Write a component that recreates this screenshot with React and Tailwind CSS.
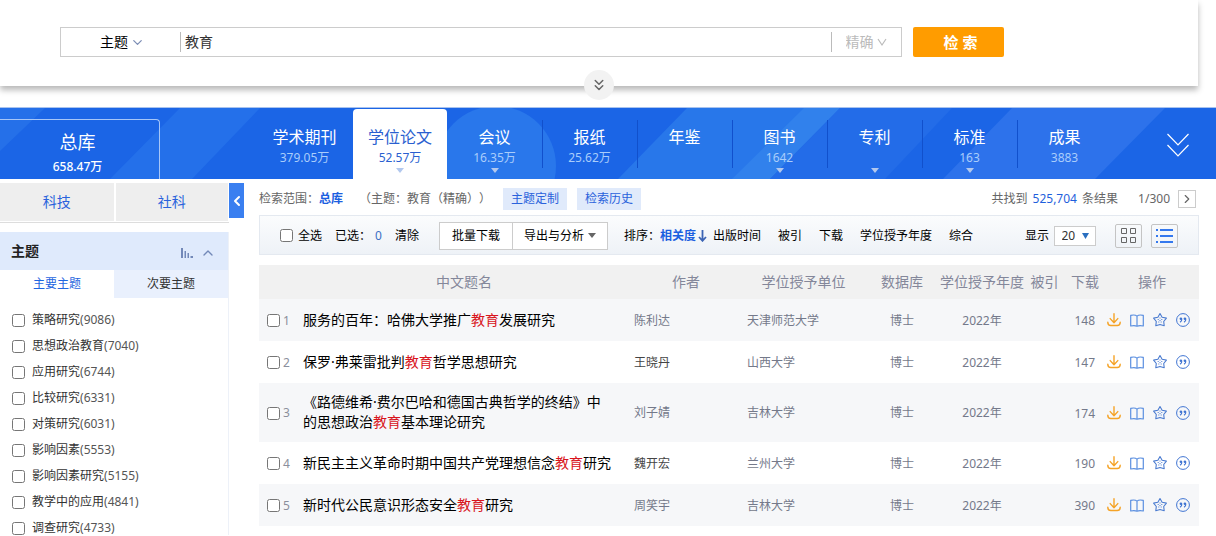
import { useState } from "react";
import { ChevronDown, ChevronLeft, ChevronRight, ChevronUp, ChevronsDown } from "lucide-react";

const databases = [
  { name: "学术期刊", count: "379.05万" },
  { name: "学位论文", count: "52.57万", more: true },
  { name: "会议", count: "16.35万", more: true },
  { name: "报纸", count: "25.62万" },
  { name: "年鉴", count: "" },
  { name: "图书", count: "1642", more: true },
  { name: "专利", count: "", more: true },
  { name: "标准", count: "163", more: true },
  { name: "成果", count: "3883" },
];

const topics = [
  ["策略研究", 9086],
  ["思想政治教育", 7040],
  ["应用研究", 6744],
  ["比较研究", 6331],
  ["对策研究", 6031],
  ["影响因素", 5553],
  ["影响因素研究", 5155],
  ["教学中的应用", 4841],
  ["调查研究", 4733],
];

const results = [
  { title: "服务的百年：哈佛大学推广教育发展研究", author: "陈利达", unit: "天津师范大学", downloads: 148 },
  { title: "保罗·弗莱雷批判教育哲学思想研究", author: "王晓丹", unit: "山西大学", downloads: 147, linked: true },
  { title: "《路德维希·费尔巴哈和德国古典哲学的终结》中的思想政治教育基本理论研究", author: "刘子婧", unit: "吉林大学", downloads: 174 },
  { title: "新民主主义革命时期中国共产党理想信念教育研究", author: "魏开宏", unit: "兰州大学", downloads: 190, linked: true },
  { title: "新时代公民意识形态安全教育研究", author: "周笑宇", unit: "吉林大学", downloads: 390 },
];

function DownloadIcon() {
  return (
    <svg width="14" height="14" viewBox="0 0 14 14" fill="none" stroke="#f5a327" strokeWidth="1.4" strokeLinecap="round" strokeLinejoin="round">
      <path d="M7 .8v9M3.2 5.6 7 9.8l3.8-4.2" />
      <path d="M.8 9.3c0 2.2 1 3.2 3 3.2h6.4c2 0 3-1 3-3.2" />
    </svg>
  );
}

function BookIcon() {
  return (
    <svg width="14" height="14" viewBox="0 0 14 14" fill="none" stroke="#5b8fe0" strokeWidth="1.2" strokeLinejoin="round">
      <path d="M7 3.2C5.6 1.8 3 1.8.7 2.400v10.600c2.400-.4 4.700-.4 6.300.2 1.600-.6 3.900-.6 6.300-.2V2.400C11 1.800 8.400 1.800 7 3.200zM7 3.200v10" />
    </svg>
  );
}

function StarIcon() {
  return (
    <svg width="14" height="14" viewBox="0 0 14 14" fill="none" stroke="#4a7bd0" strokeWidth="1.1" strokeLinejoin="round">
      <path d="M7 .6l2.100 3.700 4.300.8-2.700 3.400.5 4.300L7 11.400l-4.200 1.400.5-4.300L.6 5.100l4.300-.8z" />
      <path d="M4.700 6.500h1M8.300 6.500h1M6.500 5h1M6.500 7.500h1M5.300 9h1M7.700 9h1" strokeWidth="1" />
    </svg>
  );
}

function QuoteIcon() {
  return (
    <svg width="14" height="14" viewBox="0 0 14 14" fill="none" stroke="#3f74d2">
      <circle cx="7" cy="7" r="6.4" strokeWidth="1" />
      <circle cx="4.900" cy="5.700" r="1.300" fill="#3f74d2" stroke="none" />
      <circle cx="8.900" cy="5.700" r="1.300" fill="#3f74d2" stroke="none" />
      <path d="M5.800 5.700c.2 1.700-.5 2.900-1.800 3.600M9.800 5.700c.2 1.700-.5 2.900-1.800 3.600" strokeWidth="1.100" />
    </svg>
  );
}

function Triangle({ className }) {
  return (
    <svg width="8" height="5" viewBox="0 0 8 5" className={className}>
      <path d="M0 0h8L4 5z" fill="currentColor" />
    </svg>
  );
}

function SearchPanel() {
  return (
    <section className="relative mr-[18px] h-[86px] bg-white pt-[27px] pr-[194px] pl-[60px] shadow-[0_4px_6px_rgba(0,0,0,0.28)]">
      <form className="flex gap-[11px]" onSubmit={(e) => e.preventDefault()}>
        <div className="flex h-[30px] flex-1 items-center border border-[#ccc] text-sm">
          <label className="flex w-[119px] items-center justify-center gap-0.5 pl-1">
            <select aria-label="检索项" className="appearance-none text-black outline-none">
              <option>主题</option>
            </select>
            <ChevronDown size={15} className="text-[#7c8db5]" />
          </label>
          <input
            aria-label="检索词"
            defaultValue="教育"
            className="h-5 min-w-0 flex-1 border-l border-[#bbb] pl-1 text-[#333] outline-none"
          />
          <label className="flex h-5 w-[70px] items-center justify-center gap-0.5 border-l border-[#bbb] text-[#bbb]">
            <select aria-label="匹配方式" className="appearance-none outline-none">
              <option>精确</option>
            </select>
            <svg width="12" height="10" viewBox="0 0 12 10" fill="none" stroke="currentColor" strokeWidth="1.200">
              <path d="M2 2l4 6 4-6" />
            </svg>
          </label>
        </div>
        <button className="h-[30px] w-[91px] rounded-xs bg-[#ff9c00] pl-1 text-[15px] font-bold text-white">检 索</button>
      </form>
      <button
        aria-label="展开"
        className="absolute -bottom-[14px] left-1/2 flex size-[30px] -translate-x-1/2 items-center justify-center rounded-full bg-[#f2f2f2] text-[#666]"
      >
        <ChevronsDown size={18} />
      </button>
    </section>
  );
}

function DatabaseNav() {
  const [active, setActive] = useState("学位论文");

  return (
    <nav className="relative mt-[21px] border-t border-[#a9c3ee] bg-[#1b65e6]">
      {/* Diagonal background pattern */}
      <svg className="absolute inset-0 size-full" viewBox="0 0 1216 71" preserveAspectRatio="none">
        <path d="M0 0h45L0 43z" fill="#2570e9" />
        <path d="M180 0h80l-68 71h-82z" fill="#2470ea" />
        <circle cx="496" cy="58" r="60" fill="#2977eb" />
        <path d="M687 0h153l-70 71H618z" fill="#2877ea" />
        <path d="M804 0h36l-70 71h-38z" fill="#3181ec" />
        <path d="M840 0h112l-67 71H770z" fill="#236ce8" />
        <path d="M1012 0h153l-70 71H943z" fill="#2d72eb" />
      </svg>

      <div className="relative flex h-[71px]">
        <button className="mt-[11px] mr-[97px] flex w-[160px] flex-col items-center rounded-tr-sm border-t border-r border-[#a6c6f8] pt-3 pr-1 text-white">
          <span className="text-lg leading-5">总库</span>
          <span className="mt-[5px] text-xs leading-5 font-medium">658.47万</span>
        </button>
        <div className="grid flex-1 grid-cols-9">
          {databases.map((db, i) => (
            <button
              key={db.name}
              onClick={() => setActive(db.name)}
              className={
                active === db.name
                  ? "mt-px ml-px flex flex-col items-center rounded-t-sm bg-white pt-[18px] text-[#2a5fd0]"
                  : "flex flex-col items-center pt-[19px] text-white"
              }
            >
              <span className="relative w-full text-base leading-5">
                {db.name}
                {i > 1 && i < 8 && <span className="absolute -top-[7px] -right-px h-[48px] w-px bg-[#1150cc]" />}
              </span>
              <span className={active === db.name ? "mt-px h-5 text-xs leading-5" : "mt-px h-5 text-xs leading-5 text-[#a9cdfb]"}>
                {db.count}
              </span>
              {db.more && <Triangle className="text-[#b2c8ee]" />}
            </button>
          ))}
        </div>
        <button aria-label="更多" className="flex w-[104px] items-center justify-center pt-0.5 pl-7 text-white">
          <svg width="22" height="24" viewBox="0 0 22 24" fill="none" stroke="currentColor" strokeWidth="1.200">
            <path d="M.5 1 11 12 21.500 1M.5 12 11 23 21.500 12" />
          </svg>
        </button>
      </div>
    </nav>
  );
}

function Sidebar() {
  return (
    <aside className="w-[229px] shrink-0">
      <div className="mt-1 grid grid-cols-2 gap-0.5 border-b border-[#ddd] pb-px text-sm text-[#2a62dc]">
        <button className="h-[38px] bg-[#eee]">科技</button>
        <button className="mr-px h-[38px] bg-[#eee]">社科</button>
      </div>
      <div className="mt-[9px] border-r border-[#edf1f8]">
        <div className="flex h-[38px] items-center bg-[#dfeafc] pr-3 pl-[11px]">
          <h2 className="flex-1 text-sm font-bold text-[#222]">主题</h2>
          <svg width="12" height="10" viewBox="0 0 12 10" className="mt-1 mr-[7px]" fill="#7288b8">
            <path d="M0 0h2v10H0zM3.500 3h1.500v7H3.500zM6.500 5H8v5H6.500zM9.500 8H12v2H9.500z" />
          </svg>
          <ChevronUp size={16} className="mt-1 text-[#7288b8]" />
        </div>
        <div className="grid h-7 grid-cols-2 text-xs">
          <button className="text-[#1f66e0]">主要主题</button>
          <button className="bg-[#e9f0fd] text-[#333]">次要主题</button>
        </div>
        <ul className="flex flex-col gap-3 pt-[15px] pl-3">
          {topics.map(([name, count]) => (
            <li key={name}>
              <label className="flex h-3.5 items-center gap-[7px] text-xs leading-3.5 text-[#333]">
                <input type="checkbox" className="size-[13px]" />
                <span>
                  {name}
                  <span className="text-[#555]">({count})</span>
                </span>
              </label>
            </li>
          ))}
        </ul>
      </div>
    </aside>
  );
}

function ScopeBar() {
  return (
    <div className="flex h-9 items-center pt-1 text-xs text-[#666]">
      <span>检索范围：</span>
      <b className="text-[#1b60e0]">总库</b>
      <span className="ml-4 whitespace-nowrap">（主题：教育（精确））</span>
      <button className="ml-3 h-[22px] bg-[#e0eafb] px-2 text-[#2a62dc]">主题定制</button>
      <button className="ml-[10px] h-[22px] bg-[#e0eafb] px-2 text-[#2a62dc]">检索历史</button>
      <span className="ml-auto">
        共找到 <span className="mx-0.5 text-[#1f5fdc]">525,704</span> 条结果
      </span>
      <span className="ml-5">1/300</span>
      <button aria-label="下一页" className="mr-[3px] ml-2 flex size-[18px] items-center justify-center border border-[#ccc]">
        <ChevronRight size={14} />
      </button>
    </div>
  );
}

function Toolbar() {
  return (
    <div className="flex h-10 items-center border border-[#e4e9f0] bg-linear-to-b from-[#fbfcfd] to-[#eef2f7] pt-px pr-5 pl-5 text-xs whitespace-nowrap text-black">
      <label className="flex items-center gap-[5px]">
        <input type="checkbox" className="size-[13px]" />
        全选
      </label>
      <span className="ml-[13px]">
        已选：<span className="ml-1 text-[#3c6fc4]">0</span>
      </span>
      <button className="ml-[13px]">清除</button>
      <div className="ml-5 flex h-7">
        <button className="border border-[#ccc] bg-white px-3">批量下载</button>
        <button className="-ml-px flex items-center gap-1 border border-[#ccc] bg-white px-[11px]">
          导出与分析
          <Triangle className="text-[#666]" />
        </button>
      </div>
      <span className="ml-4">排序：</span>
      <button className="flex items-center font-bold text-[#1b60e0]">
        相关度
        <svg width="9" height="12" viewBox="0 0 9 12" className="ml-0.5" fill="none" stroke="#3c64b4" strokeWidth="1.800">
          <path d="M4.500 0v10.500M1 7l3.500 3.800L8 7" />
        </svg>
      </button>
      <button className="ml-[6px]">出版时间</button>
      <button className="ml-[17px]">被引</button>
      <button className="ml-[17px]">下载</button>
      <button className="ml-[17px]">学位授予年度</button>
      <button className="ml-[17px]">综合</button>
      <label className="ml-auto flex items-center gap-[5px]">
        显示
        <span className="flex h-5 w-[42px] items-center justify-center gap-1.5 border border-[#ccc] bg-white text-[#333]">
          <select className="appearance-none outline-none">
            <option>20</option>
          </select>
          <svg width="7" height="6" viewBox="0 0 7 6">
            <path d="M0 0h7L3.500 6z" fill="#2a6fc0" />
          </svg>
        </span>
      </label>
      <button aria-label="摘要视图" className="ml-[19px] flex h-6 w-[27px] items-center justify-center rounded-xs border border-[#c4c4c4]">
        <svg width="17" height="17" viewBox="0 0 17 17" fill="none" stroke="#666">
          <path d="M1.500 1.500h5v5h-5zM10.500 1.500h5v5h-5zM1.500 10.500h5v5h-5zM10.500 10.500h5v5h-5z" />
        </svg>
      </button>
      <button aria-label="列表视图" className="ml-[9px] flex h-6 w-[27px] items-center justify-center rounded-xs border border-[#c4c4c4]">
        <svg width="17" height="14" viewBox="0 0 17 14" fill="#3478ee">
          <path d="M0 0h2v2H0zM4 0h13v2H4zM0 6h2v2H0zM4 6h13v2H4zM0 12h2v2H0zM4 12h13v2H4z" />
        </svg>
      </button>
    </div>
  );
}

function ResultTable() {
  return (
    <table className="mt-[10px] w-full table-fixed text-xs text-[#74798a]">
      <thead>
        <tr className="h-[34px] bg-[#f1f1f1] text-sm whitespace-nowrap text-[#84879a] *:font-normal">
          <th className="w-[44px]"></th>
          <th>中文题名</th>
          <th className="w-[122px]">作者</th>
          <th className="w-[113px]">学位授予单位</th>
          <th className="w-[80px] pl-1">数据库</th>
          <th className="w-[84px]">学位授予年度</th>
          <th className="w-[41px]">被引</th>
          <th className="w-[40px]">下载</th>
          <th className="w-[94px]">操作</th>
        </tr>
      </thead>
      <tbody>
        {results.map((row, i) => {
          const [before, after] = row.title.split("教育");
          return (
            <tr key={row.title} className="h-[42px] odd:bg-[#f6f7f9]">
              <td className="pt-px pl-2">
                <label className="flex items-center gap-[3px] text-[#8b8f9c]">
                  <input type="checkbox" className="size-[13px]" />
                  {i + 1}
                </label>
              </td>
              <td className="pt-[9px] pr-3 pb-[10px] text-sm leading-5">
                <a href="#" className="text-black">
                  {before}
                  <em className="text-[#d8141c] not-italic">教育</em>
                  {after}
                </a>
              </td>
              <td className="pt-px pl-[9px]">{row.linked ? <a href="#" className="text-[#444]">{row.author}</a> : row.author}</td>
              <td className="pt-px">{row.unit}</td>
              <td className="pt-px pl-1 text-center">博士</td>
              <td className="pt-px text-center">2022年</td>
              <td></td>
              <td className="pt-0.5 pr-[10px] text-right">{row.downloads}</td>
              <td>
                <div className="flex items-center gap-[9px] pl-0.5">
                  <button aria-label="下载"><DownloadIcon /></button>
                  <button aria-label="阅读"><BookIcon /></button>
                  <button aria-label="收藏"><StarIcon /></button>
                  <button aria-label="引用"><QuoteIcon /></button>
                </div>
              </td>
            </tr>
          );
        })}
      </tbody>
    </table>
  );
}

export default function App() {
  return (
    <div
      lang="zh-CN"
      className="min-h-screen overflow-hidden bg-white font-['Noto_Sans','Noto_Sans_CJK_SC',sans-serif] [text-spacing-trim:space-all]"
    >
      <SearchPanel />
      <DatabaseNav />
      <div className="flex items-start">
        <Sidebar />
        <button aria-label="收起" className="mt-1 flex h-[35px] w-[15px] shrink-0 items-center justify-center bg-[#3a7ff0] text-white">
          <ChevronLeft size={16} strokeWidth={3} className="shrink-0" />
        </button>
        <main className="mr-[17px] ml-[15px] min-w-0 flex-1">
          <ScopeBar />
          <Toolbar />
          <ResultTable />
        </main>
      </div>
    </div>
  );
}
